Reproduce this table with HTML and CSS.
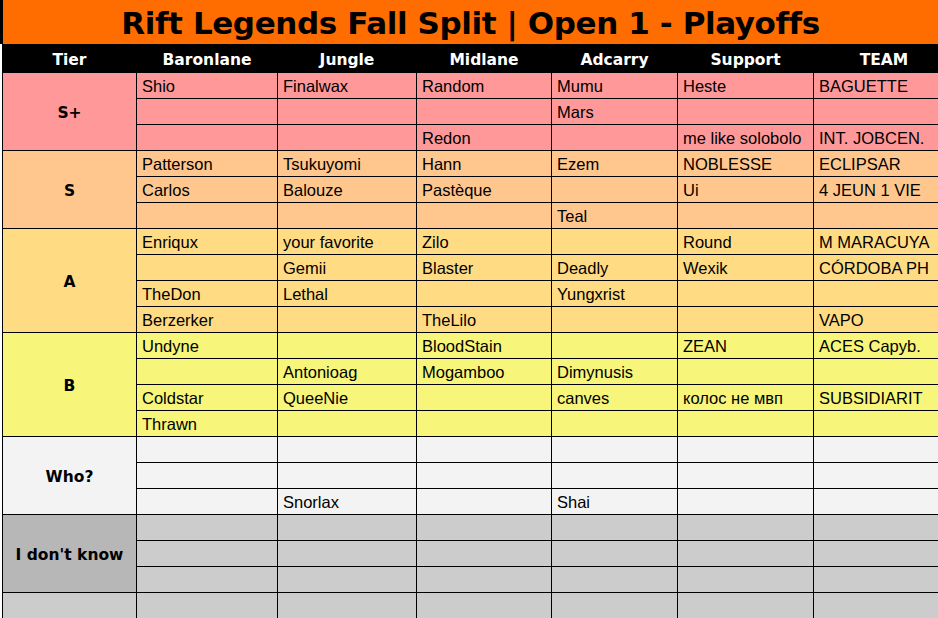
FILE: index.html
```html
<!DOCTYPE html>
<html>
<head>
<meta charset="utf-8">
<link rel="stylesheet" href="styles.css">
</head>
<body>
<div class="title">Rift Legends Fall Split | Open 1 - Playoffs</div>
<div class="sheet">
  <div class="hd">Tier</div><div class="hd">Baronlane</div><div class="hd">Jungle</div><div class="hd">Midlane</div><div class="hd">Adcarry</div><div class="hd">Support</div><div class="hd">TEAM</div>

  <div class="tier sp span3">S+</div>
  <div class="c sp">Shio</div><div class="c sp">Finalwax</div><div class="c sp">Random</div><div class="c sp">Mumu</div><div class="c sp">Heste</div><div class="c sp">BAGUETTE</div>
  <div class="c sp"></div><div class="c sp"></div><div class="c sp"></div><div class="c sp">Mars</div><div class="c sp"></div><div class="c sp"></div>
  <div class="c sp"></div><div class="c sp"></div><div class="c sp">Redon</div><div class="c sp"></div><div class="c sp">me like solobolo</div><div class="c sp">INT. JOBCEN.</div>

  <div class="tier s span3">S</div>
  <div class="c s">Patterson</div><div class="c s">Tsukuyomi</div><div class="c s">Hann</div><div class="c s">Ezem</div><div class="c s">NOBLESSE</div><div class="c s">ECLIPSAR</div>
  <div class="c s">Carlos</div><div class="c s">Balouze</div><div class="c s">Pastèque</div><div class="c s"></div><div class="c s">Ui</div><div class="c s">4 JEUN 1 VIE</div>
  <div class="c s"></div><div class="c s"></div><div class="c s"></div><div class="c s">Teal</div><div class="c s"></div><div class="c s"></div>

  <div class="tier a span4">A</div>
  <div class="c a">Enriqux</div><div class="c a">your favorite</div><div class="c a">Zilo</div><div class="c a"></div><div class="c a">Round</div><div class="c a">M MARACUYA</div>
  <div class="c a"></div><div class="c a">Gemii</div><div class="c a">Blaster</div><div class="c a">Deadly</div><div class="c a">Wexik</div><div class="c a">CÓRDOBA PH</div>
  <div class="c a">TheDon</div><div class="c a">Lethal</div><div class="c a"></div><div class="c a">Yungxrist</div><div class="c a"></div><div class="c a"></div>
  <div class="c a">Berzerker</div><div class="c a"></div><div class="c a">TheLilo</div><div class="c a"></div><div class="c a"></div><div class="c a">VAPO</div>

  <div class="tier b span4">B</div>
  <div class="c b">Undyne</div><div class="c b"></div><div class="c b">BloodStain</div><div class="c b"></div><div class="c b">ZEAN</div><div class="c b">ACES Capyb.</div>
  <div class="c b"></div><div class="c b">Antonioag</div><div class="c b">Mogamboo</div><div class="c b">Dimynusis</div><div class="c b"></div><div class="c b"></div>
  <div class="c b">Coldstar</div><div class="c b">QueeNie</div><div class="c b"></div><div class="c b">canves</div><div class="c b">колос не мвп</div><div class="c b">SUBSIDIARIT</div>
  <div class="c b">Thrawn</div><div class="c b"></div><div class="c b"></div><div class="c b"></div><div class="c b"></div><div class="c b"></div>

  <div class="tier who span3">Who?</div>
  <div class="c who"></div><div class="c who"></div><div class="c who"></div><div class="c who"></div><div class="c who"></div><div class="c who"></div>
  <div class="c who"></div><div class="c who"></div><div class="c who"></div><div class="c who"></div><div class="c who"></div><div class="c who"></div>
  <div class="c who"></div><div class="c who">Snorlax</div><div class="c who"></div><div class="c who">Shai</div><div class="c who"></div><div class="c who"></div>

  <div class="tier idk-t span3">I don't know</div>
  <div class="c idk"></div><div class="c idk"></div><div class="c idk"></div><div class="c idk"></div><div class="c idk"></div><div class="c idk"></div>
  <div class="c idk"></div><div class="c idk"></div><div class="c idk"></div><div class="c idk"></div><div class="c idk"></div><div class="c idk"></div>
  <div class="c idk"></div><div class="c idk"></div><div class="c idk"></div><div class="c idk"></div><div class="c idk"></div><div class="c idk"></div>

  <div class="c idk"></div><div class="c idk"></div><div class="c idk"></div><div class="c idk"></div><div class="c idk"></div><div class="c idk"></div><div class="c idk"></div>
</div>
</body>
</html>
```

FILE: styles.css
```css
html, body {
  margin: 0;
  padding: 0;
  background: #ffffff;
  overflow: hidden;
}

body {
  width: 938px;
  height: 618px;
}

.title {
  height: 44px;
  box-sizing: border-box;
  border-left: 3px solid #000;
  background: #ff6d01;
  color: #000;
  font-family: "DejaVu Sans", sans-serif;
  font-weight: bold;
  font-size: 31px;
  line-height: 46px;
  text-align: center;
  white-space: nowrap;
  letter-spacing: -0.4px;
}

.sheet {
  display: grid;
  grid-template-columns: 133px 140px 138px 134px 125px 135px 140px;
  grid-template-rows: 28px repeat(21, 25px);
  gap: 1px;
  background: #000;
  padding-left: 1px;
  margin-left: 2px;
  width: max-content;
}

.hd {
  background: #000;
  color: #fff;
  font-family: "DejaVu Sans", sans-serif;
  font-weight: bold;
  font-size: 15.5px;
  display: flex;
  align-items: center;
  justify-content: center;
  padding-top: 4px;
}

.tier {
  font-family: "DejaVu Sans", sans-serif;
  font-weight: bold;
  font-size: 15.5px;
  color: #000;
  display: flex;
  align-items: center;
  justify-content: center;
  padding-top: 2px;
}

.span3 { grid-row: span 3; }
.span4 { grid-row: span 4; }

.c {
  font-family: "Liberation Sans", Arial, sans-serif;
  font-size: 16.5px;
  line-height: 25px;
  color: #000;
  padding-left: 5px;
  padding-top: 1px;
  box-sizing: border-box;
  white-space: nowrap;
  overflow: hidden;
}

.sp { background: #ff9999; }
.s { background: #ffc78d; }
.a { background: #ffdc84; }
.b { background: #f7f57a; }
.who { background: #f3f3f3; }
.idk { background: #cccccc; }
.idk-t { background: #b7b7b7; }
```
